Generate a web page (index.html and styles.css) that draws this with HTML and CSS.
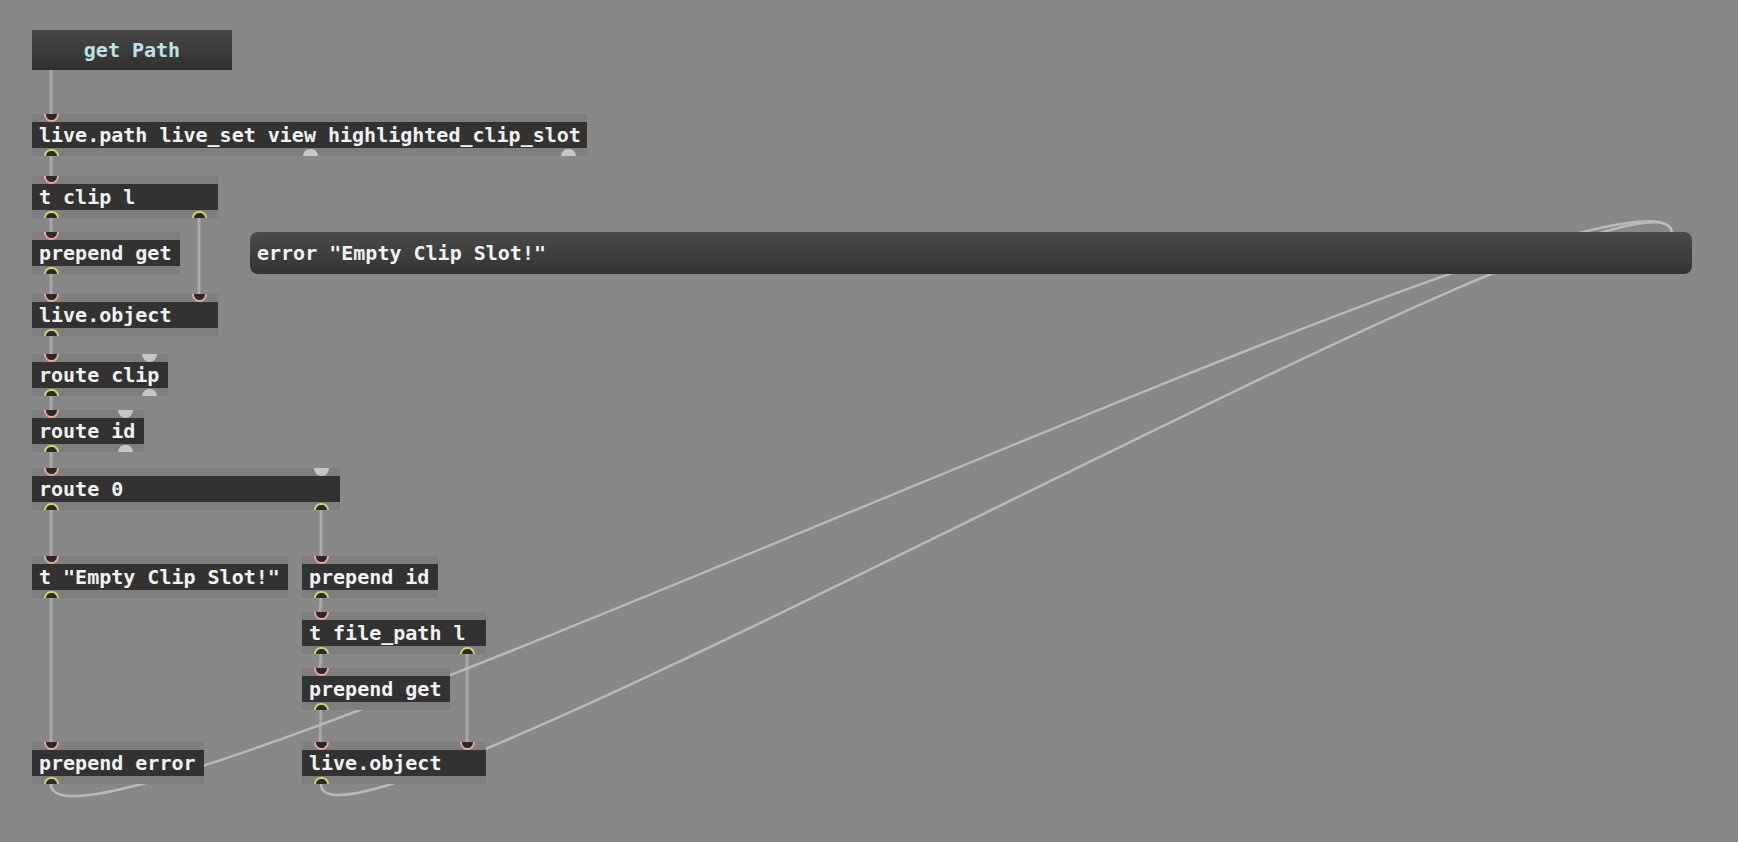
FILE: index.html
```html
<!DOCTYPE html>
<html>
<head>
<meta charset="utf-8">
<link rel="stylesheet" href="styles.css">
</head>
<body>
<div class="canvas">
  <svg class="cords" width="1738" height="842" viewBox="0 0 1738 842">
    <g class="straight">
      <line x1="51" y1="70" x2="51" y2="116"/>
      <line x1="51" y1="154" x2="51" y2="178"/>
      <line x1="51" y1="216" x2="51" y2="234"/>
      <line x1="199" y1="216" x2="199" y2="296"/>
      <line x1="51" y1="272" x2="51" y2="296"/>
      <line x1="51" y1="334" x2="51" y2="356"/>
      <line x1="51" y1="394" x2="51" y2="412"/>
      <line x1="51" y1="450" x2="51" y2="470"/>
      <line x1="51" y1="508" x2="51" y2="558"/>
      <line x1="321" y1="508" x2="321" y2="558"/>
      <line x1="51" y1="596" x2="51" y2="744"/>
      <line x1="321" y1="596" x2="320" y2="614"/>
      <line x1="321" y1="652" x2="320" y2="670"/>
      <line x1="467" y1="652" x2="467" y2="744"/>
      <line x1="321" y1="708" x2="320" y2="744"/>
    </g>
    <g class="curved">
      <path d="M51 784 C51 902 1672 112 1672 234"/>
      <path d="M321 784 C321 896 1672 118 1672 234"/>
    </g>
  </svg>

  <div class="button get-path">get Path</div>

  <div class="obj o-livepath">
    <div class="band top"><span class="port in"></span></div>
    <div class="body">live.path live_set view highlighted_clip_slot</div>
    <div class="band bottom"><span class="port out"></span><span class="port gray out"></span><span class="port gray out"></span></div>
  </div>

  <div class="obj o-tclip">
    <div class="band top"><span class="port in"></span></div>
    <div class="body">t clip l</div>
    <div class="band bottom"><span class="port out"></span><span class="port out"></span></div>
  </div>

  <div class="obj o-prepget1">
    <div class="band top"><span class="port in"></span></div>
    <div class="body">prepend get</div>
    <div class="band bottom"><span class="port out"></span></div>
  </div>

  <div class="obj o-liveobj1">
    <div class="band top"><span class="port in"></span><span class="port in"></span></div>
    <div class="body">live.object</div>
    <div class="band bottom"><span class="port out"></span></div>
  </div>

  <div class="obj o-routeclip">
    <div class="band top"><span class="port in"></span><span class="port gray in"></span></div>
    <div class="body">route clip</div>
    <div class="band bottom"><span class="port out"></span><span class="port gray out"></span></div>
  </div>

  <div class="obj o-routeid">
    <div class="band top"><span class="port in"></span><span class="port gray in"></span></div>
    <div class="body">route id</div>
    <div class="band bottom"><span class="port out"></span><span class="port gray out"></span></div>
  </div>

  <div class="obj o-route0">
    <div class="band top"><span class="port in"></span><span class="port gray in"></span></div>
    <div class="body">route 0</div>
    <div class="band bottom"><span class="port out"></span><span class="port out"></span></div>
  </div>

  <div class="obj o-tempty">
    <div class="band top"><span class="port in"></span></div>
    <div class="body">t "Empty Clip Slot!"</div>
    <div class="band bottom"><span class="port out"></span></div>
  </div>

  <div class="obj o-prepid">
    <div class="band top"><span class="port in"></span></div>
    <div class="body">prepend id</div>
    <div class="band bottom"><span class="port out"></span></div>
  </div>

  <div class="obj o-tfile">
    <div class="band top"><span class="port in"></span></div>
    <div class="body">t file_path l</div>
    <div class="band bottom"><span class="port out"></span><span class="port out"></span></div>
  </div>

  <div class="obj o-prepget2">
    <div class="band top"><span class="port in"></span></div>
    <div class="body">prepend get</div>
    <div class="band bottom"><span class="port out"></span></div>
  </div>

  <div class="obj o-preperr">
    <div class="band top"><span class="port in"></span></div>
    <div class="body">prepend error</div>
    <div class="band bottom"><span class="port out"></span></div>
  </div>

  <div class="obj o-liveobj2">
    <div class="band top"><span class="port in"></span><span class="port in"></span></div>
    <div class="body">live.object</div>
    <div class="band bottom"><span class="port out"></span></div>
  </div>

  <div class="message">error "Empty Clip Slot!"</div>
</div>
</body>
</html>
```

FILE: styles.css
```css
html, body {
  margin: 0;
  padding: 0;
  background: #888888;
}

.canvas {
  position: relative;
  width: 1738px;
  height: 842px;
  overflow: hidden;
  background: #888888;
  font-family: "DejaVu Sans Mono", "Liberation Mono", monospace;
  font-weight: bold;
  font-size: 20px;
}

.cords {
  position: absolute;
  left: 0;
  top: 0;
}

.cords .straight line {
  stroke: #a9a9a9;
  stroke-width: 3;
}

.cords .curved path {
  fill: none;
  stroke: #b9b9b9;
  stroke-width: 2.5;
}

.button {
  position: absolute;
  left: 32px;
  top: 30px;
  width: 200px;
  height: 40px;
  line-height: 40px;
  text-align: center;
  color: #bfe2e4;
  background: linear-gradient(#474747, #303030);
}

.obj {
  position: absolute;
  display: flex;
  flex-direction: column;
}

.band {
  height: 8px;
  background: #7f7f7f;
  display: flex;
  justify-content: space-between;
  padding: 0 11px 0 12px;
}

.band.top {
  align-items: flex-start;
}

.band.bottom {
  align-items: flex-end;
}

.body {
  height: 26px;
  line-height: 26px;
  background: #323232;
  color: #f2f2f2;
  padding-left: 7px;
  white-space: nowrap;
  overflow: hidden;
}

.port {
  display: block;
  width: 15px;
  height: 7.5px;
  box-sizing: border-box;
  background: #2a2a2a;
}

.port.in {
  border: 2px solid #eca798;
  border-top: none;
  border-radius: 0 0 7.5px 7.5px;
}

.port.out {
  border: 2px solid #d3d46a;
  border-bottom: none;
  border-radius: 7.5px 7.5px 0 0;
}

.port.gray {
  border: none;
  background: #c6c6c6;
}

.o-livepath { left: 32px; top: 114px; width: 555px; }
.o-tclip { left: 32px; top: 176px; width: 186px; }
.o-prepget1 { left: 32px; top: 232px; width: 148px; }
.o-liveobj1 { left: 32px; top: 294px; width: 186px; }
.o-routeclip { left: 32px; top: 354px; width: 136px; }
.o-routeid { left: 32px; top: 410px; width: 112px; }
.o-route0 { left: 32px; top: 468px; width: 308px; }
.o-tempty { left: 32px; top: 556px; width: 256px; }
.o-prepid { left: 302px; top: 556px; width: 136px; }
.o-tfile { left: 302px; top: 612px; width: 184px; }
.o-prepget2 { left: 302px; top: 668px; width: 148px; }
.o-preperr { left: 32px; top: 742px; width: 172px; }
.o-liveobj2 { left: 302px; top: 742px; width: 184px; }

.message {
  position: absolute;
  left: 250px;
  top: 232px;
  width: 1442px;
  height: 42px;
  box-sizing: border-box;
  padding-left: 7px;
  line-height: 42px;
  border-radius: 8px;
  color: #f2f2f2;
  background: linear-gradient(#4a4a4a, #333333);
}
```
